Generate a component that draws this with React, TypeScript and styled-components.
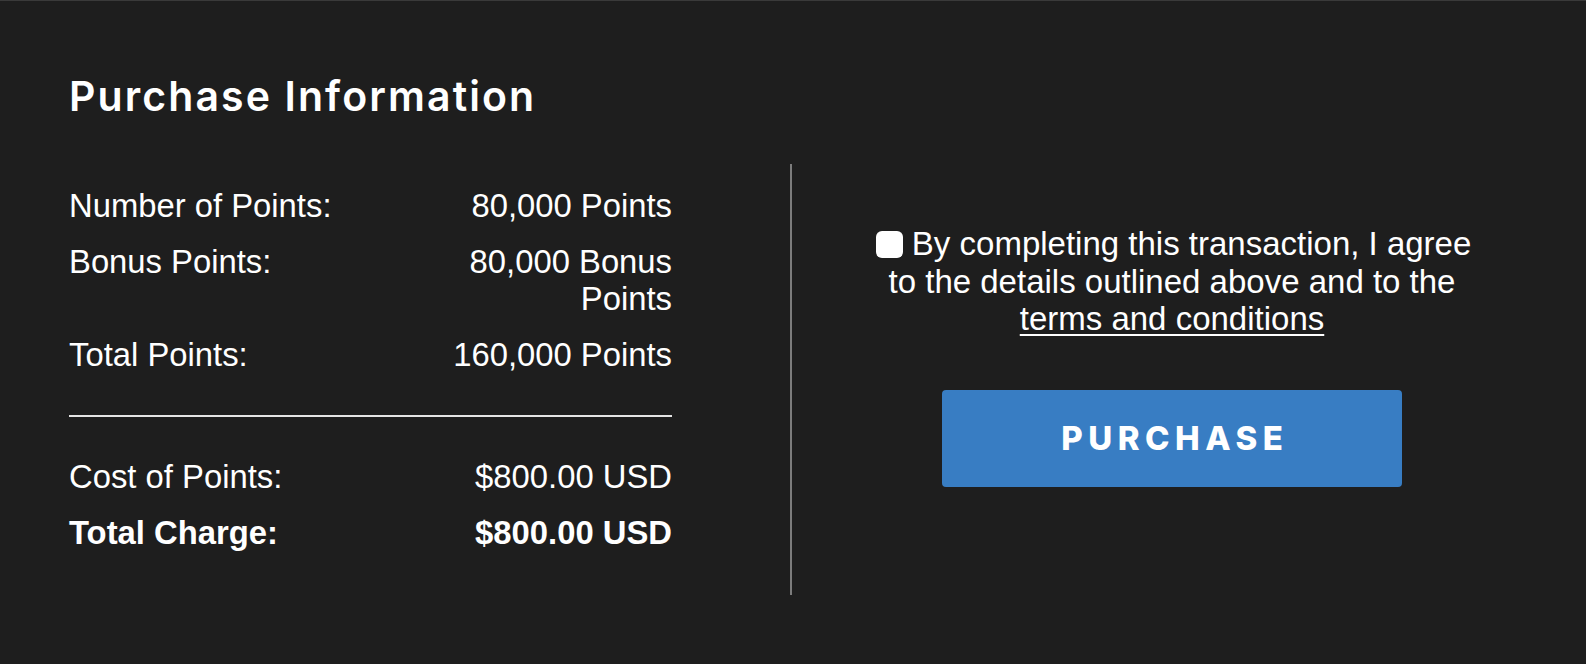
import React from "react";
import styled, { createGlobalStyle } from "styled-components";

const Global = createGlobalStyle`
  html, body { margin: 0; padding: 0; background: #1e1e1e; }
  * { box-sizing: border-box; }
`;

const Page = styled.div`
  min-height: 664px;
  background: #1e1e1e;
  border-top: 1px solid #3a3a3a;
  padding: 0 34px 0 69px;
  color: #ffffff;
  font-family: "Liberation Sans", Arial, sans-serif;
`;

const Title = styled.h1`
  margin: 0;
  padding-top: 73px;
  font-family: Inter, "Open Sans", sans-serif;
  font-weight: 600;
  font-size: 41px;
  line-height: 44px;
  letter-spacing: 2.1px;
`;

const Body = styled.div`
  display: flex;
  margin-top: 46px;
  height: 431px;
`;

const Summary = styled.div`
  width: 603px;
  padding-top: 23px;
  display: flex;
  flex-direction: column;
`;

const Rows = styled.div`
  display: flex;
  flex-direction: column;
  gap: 19px;
`;

const Row = styled.div<{ $bold?: boolean }>`
  display: grid;
  grid-template-columns: 1fr 260px;
  font-size: 32.8px;
  line-height: 37px;
  font-weight: ${(p) => (p.$bold ? 700 : 400)};
`;

const Value = styled.div`
  text-align: right;
`;

const Rule = styled.hr`
  border: none;
  height: 2px;
  background: #e4e4e4;
  margin: 42px 0 41px;
`;

const VDivider = styled.div`
  width: 2px;
  margin-left: 118px;
  background: #7c7c7c;
`;

const Agree = styled.div`
  flex: 1;
  display: flex;
  flex-direction: column;
  align-items: center;
  padding-top: 61px;
`;

const AgreeText = styled.label`
  width: 600px;
  text-align: center;
  font-size: 33px;
  line-height: 37.5px;
`;

const Check = styled.input`
  appearance: none;
  -webkit-appearance: none;
  width: 27px;
  height: 27px;
  margin: 0 0 0 3px;
  background: #ffffff;
  border-radius: 6px;
  vertical-align: -3px;
`;

const Terms = styled.a`
  color: #ffffff;
  text-decoration: underline;
  text-decoration-thickness: 2px;
  text-underline-offset: 4px;
`;

const BuyButton = styled.button`
  margin-top: 52px;
  width: 460px;
  height: 97px;
  padding: 0 0 0 5.5px;
  border: none;
  border-radius: 4px;
  background: #387dc3;
  color: #ffffff;
  font-family: Inter, "Open Sans", sans-serif;
  font-weight: 800;
  font-size: 33px;
  letter-spacing: 5.5px;
  cursor: pointer;
`;

const rows = [
  { label: "Number of Points:", value: "80,000 Points" },
  { label: "Bonus Points:", value: "80,000 Bonus Points" },
  { label: "Total Points:", value: "160,000 Points" },
];

export default function App() {
  return (
    <>
      <Global />
      <Page>
        <Title>Purchase Information</Title>
        <Body>
          <Summary>
            <Rows>
              {rows.map((r) => (
                <Row key={r.label}>
                  <div>{r.label}</div>
                  <Value>{r.value}</Value>
                </Row>
              ))}
            </Rows>
            <Rule />
            <Rows>
              <Row>
                <div>Cost of Points:</div>
                <Value>$800.00 USD</Value>
              </Row>
              <Row $bold>
                <div>Total Charge:</div>
                <Value>$800.00 USD</Value>
              </Row>
            </Rows>
          </Summary>
          <VDivider />
          <Agree>
            <AgreeText>
              <Check type="checkbox" /> By completing this transaction, I agree to the details
              outlined above and to the <Terms href="#">terms and conditions</Terms>
            </AgreeText>
            <BuyButton>PURCHASE</BuyButton>
          </Agree>
        </Body>
      </Page>
    </>
  );
}
